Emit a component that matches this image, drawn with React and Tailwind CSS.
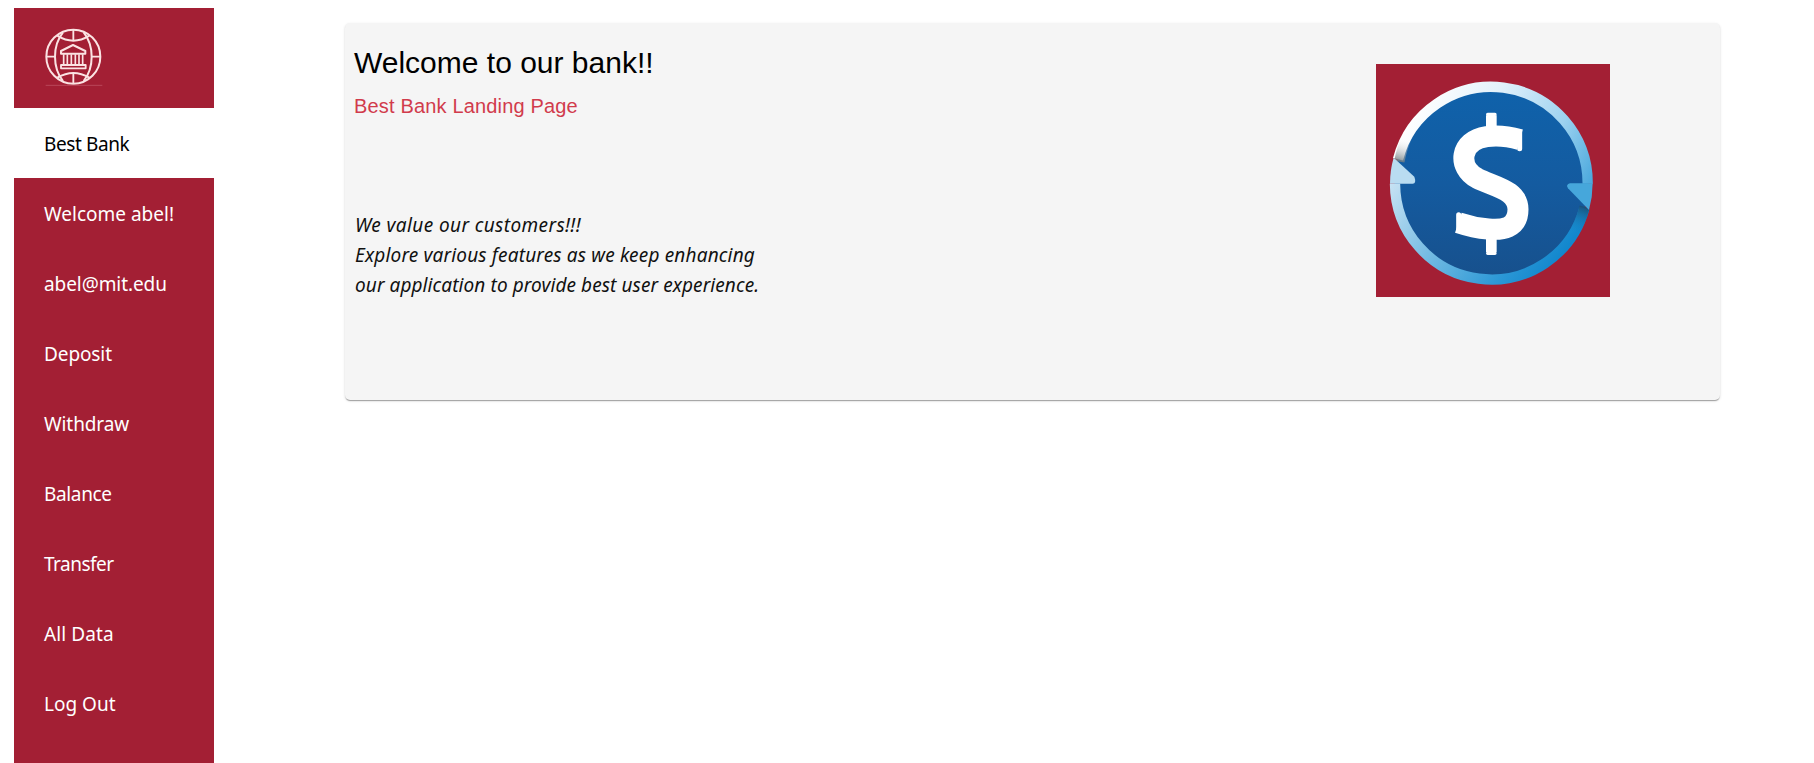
const items = [
  { label: "Best Bank", tracking: "tracking-[-0.4px]", active: true },
  { label: "Welcome abel!", tracking: "tracking-[0px]" },
  { label: "abel@mit.edu", tracking: "tracking-[-0.08px]" },
  { label: "Deposit", tracking: "tracking-[-0.1px]" },
  { label: "Withdraw", tracking: "tracking-[-0.1px]" },
  { label: "Balance", tracking: "tracking-[-0.35px]" },
  { label: "Transfer", tracking: "tracking-[-0.5px]" },
  { label: "All Data", tracking: "tracking-[0.1px]" },
  { label: "Log Out", tracking: "tracking-[0px]" },
];

function GlobeBankLogo() {
  return (
    <svg viewBox="45 36 174 180" className="h-[60px] w-[58px]" fill="none" stroke="#fbe3e3" strokeWidth="6">
      <circle cx="130" cy="125" r="81" />
      <path d="M99 52C67 92 67 158 99 198M161 52C193 92 193 158 161 198" />
      <path d="M82 62Q130 92 178 62" />
      <path d="M82 188Q130 160 178 188" />
      <path d="M130 43V77M130 173V207M48 125H75M185 125H212" strokeWidth="5.5" />
      <path d="M129 90L93 108V116H166V108Z" strokeWidth="6" strokeLinejoin="round" />
      <path d="M101 118V148M112 118V148M124 118V148M136 118V148M147 118V148M158 118V148" strokeWidth="5" />
      <path d="M93 150H167V160H93Z" strokeLinejoin="round" strokeWidth="5.5" />
      <path d="M47 211H217" stroke="#c4596c" strokeWidth="2" />
    </svg>
  );
}

function DollarEmblem() {
  return (
    <svg viewBox="48 42 702 699" preserveAspectRatio="none" className="h-[233px] w-[234px]">
      <defs>
        <linearGradient id="face" x1="0" y1="0" x2="0" y2="1">
          <stop offset="0" stopColor="#0f62ab" />
          <stop offset="0.5" stopColor="#145ba0" />
          <stop offset="1" stopColor="#17508c" />
        </linearGradient>
        <linearGradient id="upper" gradientUnits="userSpaceOnUse" x1="150" y1="200" x2="690" y2="460">
          <stop offset="0" stopColor="#ffffff" />
          <stop offset="0.35" stopColor="#e2f1fb" />
          <stop offset="0.7" stopColor="#9dd2f0" />
          <stop offset="1" stopColor="#3fa3da" />
        </linearGradient>
        <linearGradient id="lower" gradientUnits="userSpaceOnUse" x1="100" y1="350" x2="560" y2="680">
          <stop offset="0" stopColor="#cfe6f5" />
          <stop offset="0.45" stopColor="#6fb9e2" />
          <stop offset="0.8" stopColor="#2c98d6" />
          <stop offset="1" stopColor="#1287cd" />
        </linearGradient>
        <linearGradient id="shadeLeft" gradientUnits="userSpaceOnUse" x1="118" y1="335" x2="140" y2="265">
          <stop offset="0" stopColor="#6f7b80" stopOpacity="0.85" />
          <stop offset="1" stopColor="#ffffff" stopOpacity="0" />
        </linearGradient>
        <linearGradient id="shadeRight" gradientUnits="userSpaceOnUse" x1="672" y1="465" x2="645" y2="550">
          <stop offset="0" stopColor="#1a4d74" />
          <stop offset="1" stopColor="#1287cd" stopOpacity="0" />
        </linearGradient>
      </defs>
      <rect x="48" y="42" width="702" height="699" fill="#a31f34" />
      <circle cx="394" cy="401" r="290" fill="url(#face)" />
      <path d="M114 328A289 289 0 0 1 683 401" fill="none" stroke="url(#upper)" strokeWidth="31" />
      <path d="M673 475A289 289 0 0 1 105 401" fill="none" stroke="url(#lower)" strokeWidth="31" />
      <path d="M118 335A289 289 0 0 1 143 258" fill="none" stroke="url(#shadeLeft)" strokeWidth="31" />
      <path d="M674 470A289 289 0 0 1 636 558" fill="none" stroke="url(#shadeRight)" strokeWidth="31" />
      <path d="M101 323L163 380Q170 400 158 401H90Q90 360 101 323Z" fill="#b9dcf1" />
      <path d="M698 400H630Q616 404 624 415L687 480Q698 440 698 400Z" fill="#46a7db" />
      <g fill="none" stroke="#ffffff">
        <path
          d="M480 269C445 259 405 256 380 260C298 272 291 352 352 385C402 410 474 420 474 478C474 536 425 541 385 537C350 534 322 527 295 518"
          strokeWidth="63"
        />
        <path d="M394 196V260M394 540V607" strokeWidth="32" />
        <path d="M383 193H405M383 610H405" strokeWidth="10" strokeLinecap="round" />
        <path d="M479 246V296M296 494V538" strokeWidth="15" strokeLinecap="round" />
      </g>
    </svg>
  );
}

export default function App() {
  return (
    <div className="flex h-[763px] overflow-hidden bg-white pt-2 pl-3.5 font-['Noto_Sans',sans-serif] text-[19px]">
      <nav className="flex w-[200px] shrink-0 flex-col bg-[#a31f34] text-white">
        <div className="h-[100px] shrink-0 pt-[19px] pl-[31px]">
          <GlobeBankLogo />
        </div>
        {items.map((item) => (
          <a
            key={item.label}
            className={`flex h-[70px] shrink-0 items-center pt-0.5 pl-[30px] whitespace-nowrap ${item.tracking} ${
              item.active ? "bg-white text-black" : ""
            }`}
          >
            <span>{item.label}</span>
          </a>
        ))}
      </nav>
      <main className="pt-[15px] pl-[130.5px]">
        <section className="flex h-[377px] w-[1375px] justify-between rounded-[5px] bg-[#f5f5f5] pr-[110px] pl-[9.5px] shadow-[0_2px_1px_-1px_rgba(0,0,0,0.2),0_1px_1px_0_rgba(0,0,0,0.14),0_1px_3px_0_rgba(0,0,0,0.12)]">
          <div className="pt-5">
            <h1 className="font-['Liberation_Sans',sans-serif] text-[30px] leading-10 text-black">Welcome to our bank!!</h1>
            <h2 className="mt-2 font-['Liberation_Sans',sans-serif] text-xl leading-[30px] tracking-[0.17px] text-[#d13b4c]">
              Best Bank Landing Page
            </h2>
            <p className="mt-[89px] pl-px leading-[30px] text-[#111] italic">
              <span className="tracking-[0.4px]">We value our customers!!!</span>
              <br />
              <span className="tracking-[0.17px]">Explore various features as we keep enhancing</span>
              <br />
              <span className="tracking-[0.09px]">our application to provide best user experience.</span>
            </p>
          </div>
          <div className="pt-[41px]">
            <DollarEmblem />
          </div>
        </section>
      </main>
    </div>
  );
}
